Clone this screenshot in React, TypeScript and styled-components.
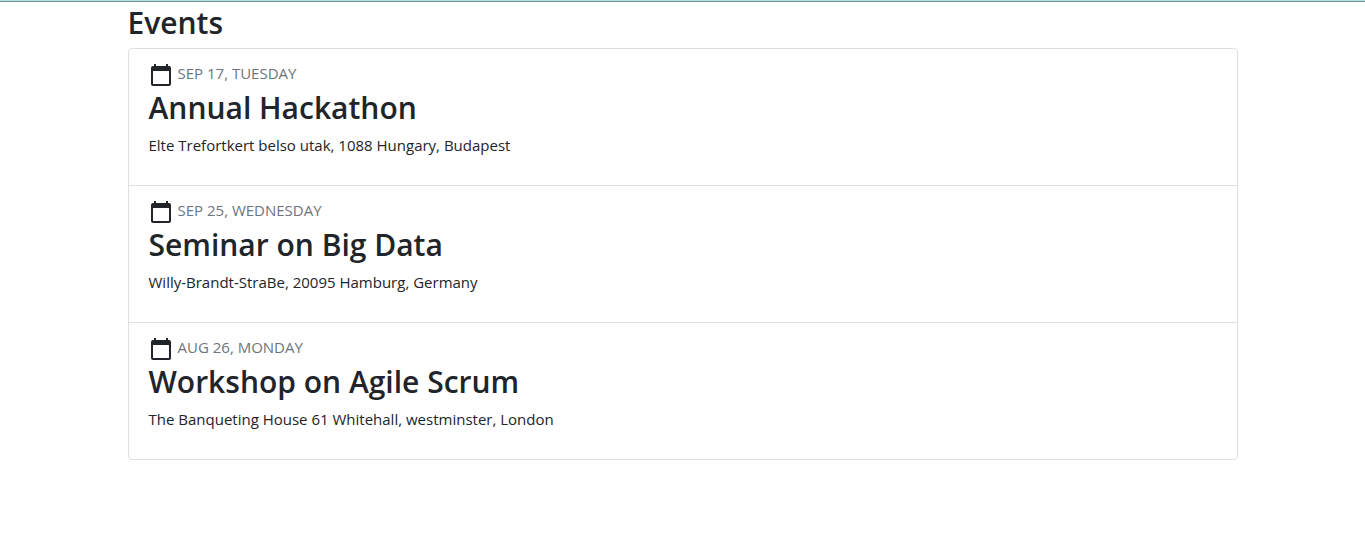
import React from "react";
import styled, { createGlobalStyle } from "styled-components";

const GlobalStyle = createGlobalStyle`
  *, *::before, *::after { box-sizing: border-box; }
  body {
    margin: 0;
    background: #fff;
    color: #212529;
    font-family: "Segoe UI", "Open Sans", "Noto Sans", sans-serif;
    font-size: 15px;
    line-height: 24px;
  }
`;

const TopBar = styled.div`
  height: 2px;
  background: #b4dcdc;
  border-bottom: 1px solid #6f9a9b;
`;

const Container = styled.main`
  width: 100%;
  max-width: 1140px;
  margin: 0 auto;
  padding: 2px 15px;
`;

const Heading = styled.h2`
  margin: 0 0 6px;
  font-size: 30px;
  font-weight: 600;
  line-height: 38px;
`;

const EventList = styled.ul`
  list-style: none;
  margin: 0;
  padding: 0;
  border: 1px solid #dfdfdf;
  border-radius: 4px;
`;

const EventItem = styled.li`
  padding: 12px 20px 28px;

  & + & {
    border-top: 1px solid #dfdfdf;
  }
`;

const DateRow = styled.div`
  display: flex;
  align-items: center;
  gap: 5px;
  height: 28px;
`;

const DateText = styled.time`
  color: #6c757d;
  padding-bottom: 4px;
`;

const Place = styled.p`
  margin: 0;
`;

function CalendarIcon() {
  return (
    <svg width="24" height="24" viewBox="0 0 24 24" fill="#212529" aria-hidden="true">
      <path d="M20 3h-1V1h-2v2H7V1H5v2H4c-1.1 0-2 .9-2 2v16c0 1.1.9 2 2 2h16c1.1 0 2-.9 2-2V5c0-1.1-.9-2-2-2zm0 18H4V8h16v13z" />
    </svg>
  );
}

const events = [
  { date: "SEP 17, TUESDAY", day: "09-17", title: "Annual Hackathon", place: "Elte Trefortkert belso utak, 1088 Hungary, Budapest" },
  { date: "SEP 25, WEDNESDAY", day: "09-25", title: "Seminar on Big Data", place: "Willy-Brandt-StraBe, 20095 Hamburg, Germany" },
  { date: "AUG 26, MONDAY", day: "08-26", title: "Workshop on Agile Scrum", place: "The Banqueting House 61 Whitehall, westminster, London" },
];

export default function App() {
  return (
    <>
      <GlobalStyle />
      <TopBar />
      <Container>
        <Heading>Events</Heading>
        <EventList>
          {events.map((event) => (
            <EventItem key={event.day}>
              <DateRow>
                <CalendarIcon />
                <DateText dateTime={event.day}>{event.date}</DateText>
              </DateRow>
              <Heading as="h3">{event.title}</Heading>
              <Place>{event.place}</Place>
            </EventItem>
          ))}
        </EventList>
      </Container>
    </>
  );
}
